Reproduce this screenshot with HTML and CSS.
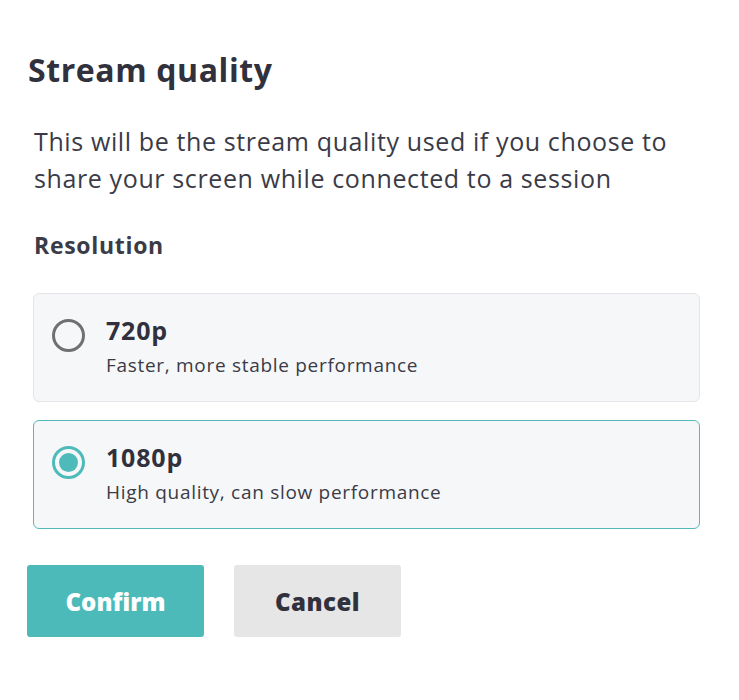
FILE: index.html
```html
<!DOCTYPE html>
<html>
<head>
<meta charset="utf-8">
<link rel="stylesheet" href="styles.css">
</head>
<body>
<div class="dialog">
  <h1 class="title">Stream quality</h1>
  <p class="desc">This will be the stream quality used if you choose to share your screen while connected to a session</p>
  <h2 class="label">Resolution</h2>
  <div class="options">
    <label class="option">
      <span class="radio"></span>
      <span class="text">
        <span class="name">720p</span>
        <span class="sub">Faster, more stable performance</span>
      </span>
    </label>
    <label class="option selected">
      <span class="radio"><span class="dot"></span></span>
      <span class="text">
        <span class="name">1080p</span>
        <span class="sub">High quality, can slow performance</span>
      </span>
    </label>
  </div>
  <div class="actions">
    <button class="btn primary">Confirm</button>
    <button class="btn secondary">Cancel</button>
  </div>
</div>
</body>
</html>
```
FILE: styles.css
```css
* { box-sizing: border-box; }
body {
  margin: 0;
  background: #fff;
  font-family: "Open Sans", Lato, sans-serif;
  color: #30313d;
}
.dialog {
  padding: 50px 39px 0 27px;
  width: 739px;
}
.title {
  margin: 0 0 0 1px;
  font-size: 32px;
  font-weight: 700;
  line-height: 40px;
  letter-spacing: 0.6px;
  color: #30313d;
}
.desc {
  margin: 33px 0 0 7px;
  font-size: 25px;
  line-height: 37px;
  letter-spacing: 0.62px;
  color: #3a3b46;
  width: 665px;
}
.label {
  margin: 33px 0 0 7px;
  font-size: 23px;
  font-weight: 700;
  line-height: 30px;
  letter-spacing: 0.7px;
  color: #3a3b46;
}
.options {
  margin: 33px 0 0 6px;
  display: flex;
  flex-direction: column;
  gap: 18px;
}
.option {
  display: flex;
  align-items: flex-start;
  height: 109px;
  background: #f6f7f9;
  border: 1px solid #e3e5e8;
  border-radius: 6px;
  padding: 23px 18px 24px;
}
.option.selected {
  border-color: #55b9bb;
}
.radio {
  width: 33px;
  height: 33px;
  border: 3px solid #707070;
  border-radius: 50%;
  margin-top: 2px;
  display: flex;
  align-items: center;
  justify-content: center;
  flex: none;
}
.selected .radio {
  border-color: #4fbaba;
}
.dot {
  width: 19px;
  height: 19px;
  border-radius: 50%;
  background: #4fbaba;
}
.text {
  display: flex;
  flex-direction: column;
  margin-left: 21px;
}
.name {
  font-size: 25px;
  font-weight: 700;
  line-height: 26px;
  letter-spacing: 0.8px;
  color: #30313d;
}
.sub {
  margin-top: 11px;
  font-size: 19px;
  line-height: 22px;
  letter-spacing: 0.7px;
  color: #3a3b46;
}
.actions {
  margin-top: 36px;
  display: flex;
  gap: 30px;
}
.btn {
  height: 72px;
  border: none;
  border-radius: 3px;
  font-family: "Open Sans", Lato, sans-serif;
  font-size: 24px;
  font-weight: 800;
}
.primary {
  width: 177px;
  background: #4dbaba;
  color: #fff;
}
.secondary {
  width: 167px;
  background: #e6e6e6;
  color: #30313d;
  letter-spacing: 0.5px;
}
```
